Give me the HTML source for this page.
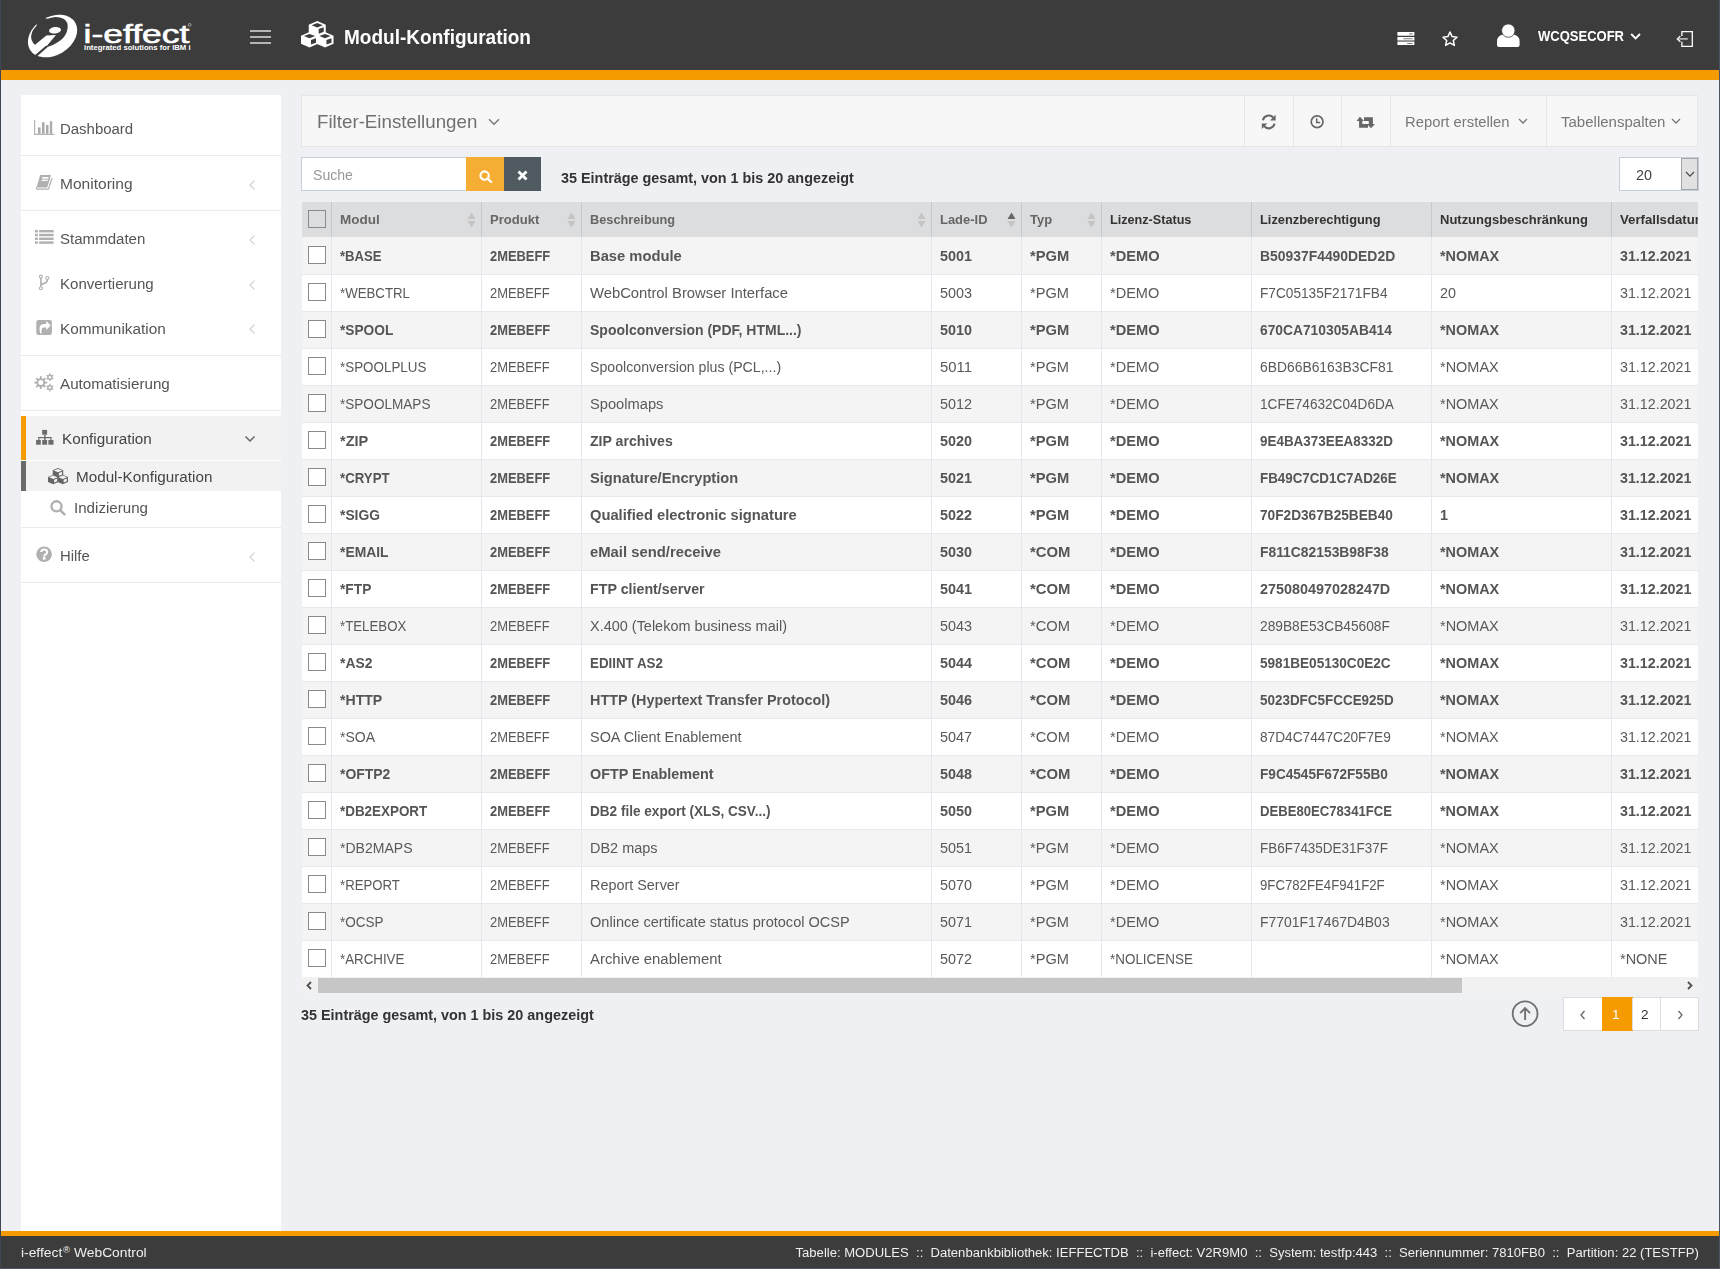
<!DOCTYPE html>
<html><head><meta charset="utf-8"><style>
*{box-sizing:border-box;margin:0;padding:0}
html,body{width:1720px;height:1269px;overflow:hidden}
body{background:#eff0f4;font-family:"Liberation Sans",sans-serif;color:#595959;position:relative}
.a{position:absolute}
.nw{white-space:nowrap}
#bl{left:0;top:0;width:1px;height:1269px;background:#3d4753;z-index:50}
#br{left:1719px;top:0;width:1px;height:1269px;background:#4b5562;z-index:50}
#bb{left:0;top:1268px;width:1720px;height:1px;background:#4b5562;z-index:50}
#hdr{left:0;top:0;width:1720px;height:70px;background:#3c3c3c}
#obar{left:0;top:70px;width:1720px;height:10px;background:#f59b00}
#title{left:344px;top:26px;font-size:19.5px;line-height:22px;font-weight:bold;color:#fff;white-space:nowrap}
#user{left:1537px;top:27px;font-size:14.6px;line-height:17px;font-weight:bold;color:#fff}
/* sidebar */
#side{left:21px;top:95px;width:260px;height:1136px;background:#fff}
.si{position:absolute;left:0;width:260px;height:20px;font-size:14.7px;line-height:20px;color:#555}
.si .t{position:absolute;left:39px;top:0;white-space:nowrap}
.sep{position:absolute;left:0;width:260px;height:1px;background:#ebebeb}
.chev{position:absolute;left:226px;top:4px}
/* filter */
#filt{left:301px;top:95px;width:1397px;height:52px;background:#f7f7f7;border:1px solid #e6e6e6}
#filt .ft{position:absolute;left:15px;top:14px;font-size:18.6px;line-height:22px;color:#777}
.vs{position:absolute;top:0;width:1px;height:50px;background:#e6e6e6}
.btxt{position:absolute;top:16px;font-size:14.7px;line-height:20px;color:#777;white-space:nowrap}
/* search */
#sin{left:301px;top:157px;width:166px;height:34px;background:#fff;border:1px solid #c7cfdb}
#sin span{position:absolute;left:11px;top:7px;font-size:14.7px;line-height:18px;color:#999}
#sbtn{left:466px;top:157px;width:38px;height:34px;background:#f5ad33}
#xbtn{left:504px;top:157px;width:37px;height:34px;background:#4f5a61}
.cnt{font-size:14.7px;line-height:18px;font-weight:bold;color:#333;white-space:nowrap}
#psel{left:1619px;top:157px;width:80px;height:34px;background:#fff;border:1px solid #c5cfdc}
#psel span{position:absolute;left:16px;top:7px;font-size:14.7px;line-height:18px;color:#555}
#pdd{position:absolute;left:61px;top:0;width:17px;height:32px;background:#e1e1e1;border:1px solid #a3a3a3}
/* table */
#tbl{left:302px;top:202px;width:1396px;height:775px;overflow:hidden;background:#fff}
.hd{position:absolute;left:0;top:0;width:1396px;height:35px;background:#dcdddf}
.row{position:absolute;left:0;width:1396px;height:37px}
.odd{background:#f4f4f4}
.even{background:#fff}
.c{position:absolute;top:0;height:37px;line-height:37px;font-size:14.7px;color:#595959;white-space:nowrap;padding-left:9px}
.b .c{font-weight:bold;color:#555}
.hd .c{height:35px;line-height:35px;font-weight:bold;color:#666;font-size:14.3px}
.hd .c.dk{color:#333}
.vl{position:absolute;top:0;width:1px;background:#e3e8ee}
.hvl{position:absolute;top:0;width:1px;height:35px;background:#c8c8c8}
.hl{position:absolute;left:0;width:1396px;height:1px;background:#e6eaef}
.cb{position:absolute;left:6px;width:18px;height:18px;border:1.5px solid #8a8a8a;background:#fff}
.hd .cb{background:#dcdddf}
.sort{position:absolute;top:10px;width:9px;height:16px}
/* scrollbar */
#sbar{left:301px;top:977px;width:1397px;height:17px;background:#f1f1f1}
#sthumb{left:318px;top:978px;width:1144px;height:15px;background:#c6c6c6}
/* pager */
.ptxt{left:301px;top:1005px}
#pg{left:1563px;top:997px;width:136px;height:34px;background:#fff;border:1px solid #dddddd}
#fobar{left:0;top:1231px;width:1720px;height:5px;background:#f59b00}
#ftr{left:0;top:1236px;width:1720px;height:33px;background:#3c3c3c;color:#fff;font-size:13.6px;line-height:16px}

.t{position:absolute;white-space:nowrap;line-height:20px;font-family:"Liberation Sans",sans-serif}

</style></head><body>
<div id="bl" class="a"></div><div id="br" class="a"></div><div id="bb" class="a"></div>
<div id="hdr" class="a"></div><div id="obar" class="a"></div>
<svg class="a" style="left:0;top:0" width="200" height="70" viewBox="0 0 200 70"><defs><mask id="lm"><rect x="0" y="0" width="200" height="70" fill="#fff"/><path d="M46.13 18.61 C48.39 18.88 53.17 16.97 55.97 16.97 C58.77 16.97 61.12 17.72 62.93 18.61 C64.74 19.49 66.04 20.86 66.83 22.30 C67.61 23.73 67.75 25.37 67.65 27.21 C67.55 29.06 67.00 31.52 66.21 33.36 C65.43 35.20 64.30 36.84 62.93 38.28 C61.57 39.71 59.79 40.81 58.02 41.97 C56.24 43.13 54.12 44.39 52.28 45.25 C50.43 46.10 48.80 46.75 46.95 47.09 C45.11 47.43 43.19 47.67 41.21 47.30 C39.23 46.92 36.60 45.93 35.07 44.84 C33.53 43.74 32.64 42.17 31.99 40.74 C31.34 39.30 31.04 37.94 31.17 36.23 C31.31 34.52 31.89 32.34 32.81 30.49 C33.73 28.65 36.12 26.87 36.70 25.16 C37.29 23.46 35.34 21.89 36.30 20.25 C37.25 18.61 40.80 15.60 42.44 15.33 C44.08 15.05 43.88 18.33 46.13 18.61Z" fill="#000"/></mask></defs><g mask="url(#lm)"><ellipse cx="52.54" cy="36.05" rx="26.4" ry="19.12" transform="rotate(-31 52.54 36.05)" fill="#fff"/></g><path d="M35.07 44.84 L46.34 35.61 L55.97 35.00 L46.34 46.48 L37.52 55.08 L34.25 50.98Z" fill="#fff"/><path d="M35.89 55.90 L46.95 46.27" stroke="#3c3c3c" stroke-width="2.2"/><ellipse cx="55.02" cy="30.29" rx="6.05" ry="3.25" transform="rotate(-7 55.02 30.29)" fill="#fff"/><g transform="translate(83.5 42.7) scale(1.365 1)"><text x="0" y="0" font-family="Liberation Sans" font-size="26" fill="#fff" stroke="#fff" stroke-width="0.6">i-effect</text></g><g transform="translate(84 50) scale(1.225 1)"><text x="0" y="0" font-family="Liberation Sans" font-weight="bold" font-size="6.3" fill="#fff">integrated solutions for IBM i</text></g><circle cx="189.6" cy="24.9" r="1.4" fill="none" stroke="#fff" stroke-width="0.5"/></svg>
<!-- hamburger -->
<div class="a" style="left:250px;top:30px;width:21px;height:2px;background:#b4b4b4"></div>
<div class="a" style="left:250px;top:36px;width:21px;height:2px;background:#b4b4b4"></div>
<div class="a" style="left:250px;top:42px;width:21px;height:2px;background:#b4b4b4"></div>
<!-- cubes -->
<svg class="a" style="left:300.6px;top:21.2px" width="33.5" height="27.5" viewBox="0 0 33.50 27.50"><path d="M16.25 0.00 L24.75 3.80 L24.75 11.80 L16.25 15.60 L7.75 11.80 L7.75 3.80Z" fill="#fff"/><path d="M10.65 4.20 L16.25 2.00 L21.85 4.20 L16.25 6.40Z" fill="#3c3c3c"/><path d="M17.65 8.10 L22.75 6.30 L22.75 10.80 L17.75 12.70Z" fill="#3c3c3c"/><path d="M8.50 10.90 L17.00 14.70 L17.00 22.70 L8.50 26.50 L0.00 22.70 L0.00 14.70Z" fill="#fff"/><path d="M2.90 15.10 L8.50 12.90 L14.10 15.10 L8.50 17.30Z" fill="#3c3c3c"/><path d="M9.90 19.00 L15.00 17.20 L15.00 21.70 L10.00 23.60Z" fill="#3c3c3c"/><path d="M24.00 10.90 L32.50 14.70 L32.50 22.70 L24.00 26.50 L15.50 22.70 L15.50 14.70Z" fill="#fff"/><path d="M18.40 15.10 L24.00 12.90 L29.60 15.10 L24.00 17.30Z" fill="#3c3c3c"/><path d="M25.40 19.00 L30.50 17.20 L30.50 21.70 L25.50 23.60Z" fill="#3c3c3c"/></svg>
<!-- server icon -->
<svg class="a" style="left:1390px;top:25px" width="30" height="25" viewBox="1390 25 30 25">
  <rect x="1397.4" y="31.9" width="17" height="3.9" rx="0.6" fill="#fff"/>
  <rect x="1397.4" y="36.9" width="17" height="3.6" rx="0.6" fill="#fff"/>
  <rect x="1397.4" y="40.5" width="17" height="1.4" fill="#9a9a9a"/>
  <rect x="1397.4" y="41.9" width="17" height="3.2" rx="0.6" fill="#fff"/>
  <rect x="1409.2" y="33.4" width="3.5" height="1" fill="#707070"/>
  <rect x="1403.3" y="38.3" width="9.3" height="0.9" fill="#707070"/>
  <rect x="1407.2" y="43.1" width="5.4" height="0.9" fill="#707070"/>
</svg>
<!-- star -->
<svg class="a" style="left:1435px;top:25px" width="30" height="25" viewBox="1435 25 30 25">
  <path d="M1450 32 L1452.1 36.6 L1457 37.2 L1453.3 40.5 L1454.4 45.4 L1450 42.9 L1445.6 45.4 L1446.7 40.5 L1443 37.2 L1447.9 36.6 Z" fill="none" stroke="#fff" stroke-width="1.5" stroke-linejoin="round"/>
</svg>
<!-- user -->
<svg class="a" style="left:1494px;top:22px" width="28" height="28" viewBox="0 0 28 28">
  <path d="M3 25 L3 19.5 Q3 13.5 9.5 12.3 Q14.3 16.3 19.1 12.3 Q25.6 13.5 25.6 19.5 L25.6 23 Q25.6 25 23.6 25 L5 25 Q3 25 3 23 Z" fill="#fff"/>
  <circle cx="14.3" cy="8.6" r="6.7" fill="#fff" stroke="#3c3c3c" stroke-width="0.8"/>
</svg>
<svg class="a" style="left:1629px;top:31px" width="13" height="10" viewBox="0 0 13 10">
  <path d="M2.2 3 L6.6 7.4 L11 3" fill="none" stroke="#fff" stroke-width="1.9"/>
</svg>
<!-- logout -->
<svg class="a" style="left:1668px;top:25px" width="32" height="27" viewBox="1668 25 32 27">
  <path d="M1681.9 35.9 L1681.9 31.6 L1692.3 31.6 L1692.3 46.3 L1681.9 46.3 L1681.9 41.8" fill="none" stroke="#fff" stroke-width="1.3"/>
  <path d="M1680.4 36 L1677.3 38.9 L1680.4 41.8" fill="none" stroke="#fff" stroke-width="1.3"/>
  <path d="M1678.3 38.9 L1687.8 38.9" stroke="#ddd" stroke-width="1.3"/>
</svg>

<div class="t" style="left:344px;top:27px;font-size:19.61px;font-weight:bold;color:#fff;transform:scaleX(0.9700);transform-origin:0 0;">Modul-Konfiguration</div>
<div class="t" style="left:1538px;top:26px;font-size:14.22px;font-weight:bold;color:#fff;transform:scaleX(0.9148);transform-origin:0 0;">WCQSECOFR</div>
<div id="side" class="a">
  <!-- Dashboard -->
  <svg class="a" style="left:13px;top:25px" width="21" height="16" viewBox="0 0 21 16">
    <path d="M0.6 0 L0.6 14.4 L20.5 14.4" fill="none" stroke="#b4b4b4" stroke-width="1.2"/>
    <rect x="4" y="7.4" width="2.6" height="6.4" fill="#aaa"/>
    <rect x="8" y="2.2" width="2.5" height="11.6" fill="#aaa"/>
    <rect x="12" y="5" width="2.5" height="8.8" fill="#aaa"/>
    <rect x="15.9" y="1.2" width="2.3" height="12.6" fill="#aaa"/>
  </svg>
  <div class="sep" style="top:60px"></div>
  <!-- Monitoring book -->
  <svg class="chev" style="left:227px;top:84px" width="8" height="12" viewBox="0 0 8 12"><path d="M6.5 1.5 L2 6 L6.5 10.5" fill="none" stroke="#d4d4d8" stroke-width="1.25"/></svg>
  <div class="sep" style="top:115px"></div>
  <!-- Stammdaten list -->
  <svg class="chev" style="left:227px;top:139px" width="8" height="12" viewBox="0 0 8 12"><path d="M6.5 1.5 L2 6 L6.5 10.5" fill="none" stroke="#d4d4d8" stroke-width="1.25"/></svg>
  <!-- Konvertierung fork -->
  <svg class="chev" style="left:227px;top:184px" width="8" height="12" viewBox="0 0 8 12"><path d="M6.5 1.5 L2 6 L6.5 10.5" fill="none" stroke="#d4d4d8" stroke-width="1.25"/></svg>
  <!-- Kommunikation share -->
  <svg class="chev" style="left:227px;top:228px" width="8" height="12" viewBox="0 0 8 12"><path d="M6.5 1.5 L2 6 L6.5 10.5" fill="none" stroke="#d4d4d8" stroke-width="1.25"/></svg>
  <div class="sep" style="top:260px"></div>
  <!-- Automatisierung gears -->
  <div class="sep" style="top:315px"></div>
  <!-- Konfiguration active -->
  <div class="a" style="left:0;top:321px;width:260px;height:44px;background:#f2f2f2"></div>
  <div class="a" style="left:0;top:321px;width:5px;height:44px;background:#f59b00"></div>
  <svg class="a" style="left:223px;top:340px" width="12" height="8" viewBox="0 0 12 8"><path d="M1.5 1.5 L6 6 L10.5 1.5" fill="none" stroke="#666" stroke-width="1.5"/></svg>
  <!-- Modul-Konfiguration sub active -->
  <div class="a" style="left:0;top:366px;width:260px;height:30px;background:#f2f2f2"></div>
  <div class="a" style="left:0;top:366px;width:5px;height:30px;background:#6b6b6b"></div>
<svg class="a" style="left:27px;top:372.8px" width="21.0" height="17.3" viewBox="0 0 34.13 28.13"><path d="M16.25 0.00 L24.75 3.80 L24.75 11.80 L16.25 15.60 L7.75 11.80 L7.75 3.80Z" fill="#666"/><path d="M9.25 4.20 L16.25 1.45 L23.25 4.20 L16.25 6.95Z" fill="#f2f2f2"/><path d="M17.65 8.10 L22.75 6.30 L22.75 10.80 L17.75 12.70Z" fill="#f2f2f2"/><path d="M8.50 10.90 L17.00 14.70 L17.00 22.70 L8.50 26.50 L0.00 22.70 L0.00 14.70Z" fill="#666"/><path d="M1.50 15.10 L8.50 12.35 L15.50 15.10 L8.50 17.85Z" fill="#f2f2f2"/><path d="M9.90 19.00 L15.00 17.20 L15.00 21.70 L10.00 23.60Z" fill="#f2f2f2"/><path d="M24.00 10.90 L32.50 14.70 L32.50 22.70 L24.00 26.50 L15.50 22.70 L15.50 14.70Z" fill="#666"/><path d="M17.00 15.10 L24.00 12.35 L31.00 15.10 L24.00 17.85Z" fill="#f2f2f2"/><path d="M25.40 19.00 L30.50 17.20 L30.50 21.70 L25.50 23.60Z" fill="#f2f2f2"/></svg>
  <!-- Indizierung -->
  <div class="sep" style="top:432px"></div>
  <!-- Hilfe -->
  <svg class="chev" style="left:227px;top:456px" width="8" height="12" viewBox="0 0 8 12"><path d="M6.5 1.5 L2 6 L6.5 10.5" fill="none" stroke="#d4d4d8" stroke-width="1.25"/></svg>
  <div class="sep" style="top:487px"></div>
</div>

<svg class="a" style="left:0;top:0" width="300" height="600" viewBox="0 0 300 600"><path d="M40.2 174.9 L51 174.9 L47.6 186.4 Q47.3 187.5 46.2 187.5 L36.5 187.5 Z" fill="#b0b0b0"/><path d="M42.5 177.1 L48.6 177.1 L48.2 178.7 L42.1 178.7 Z M41.7 179.8 L47.9 179.8 L47.6 181.1 L41.4 181.1 Z" fill="#fff"/><path d="M36.6 187.2 Q36 189.2 37.6 189.2 L48.4 189.2 L52 178.3" fill="none" stroke="#b0b0b0" stroke-width="1.2"/><rect x="34.9" y="230.0" width="3" height="2.4" fill="#b0b0b0"/><rect x="39.1" y="230.0" width="14.5" height="2.4" fill="#b0b0b0"/><rect x="34.9" y="233.8" width="3" height="2.4" fill="#b0b0b0"/><rect x="39.1" y="233.8" width="14.5" height="2.4" fill="#b0b0b0"/><rect x="34.9" y="237.6" width="3" height="2.4" fill="#b0b0b0"/><rect x="39.1" y="237.6" width="14.5" height="2.4" fill="#b0b0b0"/><rect x="34.9" y="241.4" width="3" height="2.4" fill="#b0b0b0"/><rect x="39.1" y="241.4" width="14.5" height="2.4" fill="#b0b0b0"/><g fill="none" stroke="#b0b0b0" stroke-width="1.1"><circle cx="40.9" cy="276.6" r="1.5"/><circle cx="47.4" cy="278" r="1.5"/><circle cx="40.9" cy="288.3" r="1.5"/></g><path d="M40.9 278.1 L40.9 286.8 M47.4 279.5 Q47.6 283 41.3 284.4" fill="none" stroke="#b0b0b0" stroke-width="1.6"/><rect x="36.3" y="319.9" width="15.6" height="15" rx="2.2" fill="#b0b0b0"/><path d="M50.7 325.5 L46.2 321.1 L46.2 323.9 L43.5 323.9 Q39.3 324.3 39.5 329 Q39.7 331.8 40.6 333.7 L41.5 333.7 Q41.2 330.2 41.8 328.8 Q42.5 327.6 44 327.6 L46.2 327.6 L46.2 330 Z" fill="#fff"/><g transform="translate(40.8 382.6)" fill="#b0b0b0"><circle r="4.4"/><rect x="-0.9" y="-6.4" width="1.8" height="12.8" transform="rotate(0.0)"/><rect x="-0.9" y="-6.4" width="1.8" height="12.8" transform="rotate(45.0)"/><rect x="-0.9" y="-6.4" width="1.8" height="12.8" transform="rotate(90.0)"/><rect x="-0.9" y="-6.4" width="1.8" height="12.8" transform="rotate(135.0)"/></g><circle cx="40.8" cy="382.6" r="2.5" fill="#fff"/><g transform="translate(49.9 377.3)" fill="#b0b0b0"><circle r="2.7"/><rect x="-0.65" y="-3.8" width="1.3" height="7.6" transform="rotate(0.0)"/><rect x="-0.65" y="-3.8" width="1.3" height="7.6" transform="rotate(60.0)"/><rect x="-0.65" y="-3.8" width="1.3" height="7.6" transform="rotate(120.0)"/></g><circle cx="49.9" cy="377.3" r="1.2" fill="#fff"/><g transform="translate(49.9 387.6)" fill="#b0b0b0"><circle r="2.7"/><rect x="-0.65" y="-3.8" width="1.3" height="7.6" transform="rotate(0.0)"/><rect x="-0.65" y="-3.8" width="1.3" height="7.6" transform="rotate(60.0)"/><rect x="-0.65" y="-3.8" width="1.3" height="7.6" transform="rotate(120.0)"/></g><circle cx="49.9" cy="387.6" r="1.2" fill="#fff"/><g fill="#6b6b6b"><rect x="42.2" y="429.9" width="4.9" height="4.8"/><rect x="44.2" y="434.7" width="1.4" height="5.3"/><rect x="38.3" y="437" width="13.2" height="1.2"/><rect x="38.3" y="437" width="1.1" height="3.2"/><rect x="50.4" y="437" width="1.1" height="3.2"/><rect x="36.1" y="440" width="4.7" height="4.7"/><rect x="42.2" y="440" width="4.9" height="4.7"/><rect x="48.4" y="440" width="5.1" height="4.7"/></g><circle cx="56.5" cy="506.3" r="5.05" fill="none" stroke="#b0b0b0" stroke-width="2.3"/><path d="M60.6 510.6 L64.5 514.4" stroke="#b0b0b0" stroke-width="2.5" stroke-linecap="round"/><circle cx="44.1" cy="554.3" r="7.8" fill="#b0b0b0"/><path d="M41.2 552 Q41.2 549.4 44.2 549.4 Q47.2 549.4 47.2 551.9 Q47.2 553.5 45.6 554.4 Q44.2 555.2 44.2 556.5" fill="none" stroke="#fff" stroke-width="2"/><rect x="42.9" y="557" width="2.6" height="2.7" fill="#fff"/></svg>
<div class="t" style="left:60px;top:119px;font-size:14.53px;color:#555;transform:scaleX(1.0301);transform-origin:0 0;">Dashboard</div>
<div class="t" style="left:60px;top:174px;font-size:14.53px;color:#555;transform:scaleX(1.0703);transform-origin:0 0;">Monitoring</div>
<div class="t" style="left:60px;top:229px;font-size:14.53px;color:#555;transform:scaleX(1.0370);transform-origin:0 0;">Stammdaten</div>
<div class="t" style="left:60px;top:274px;font-size:14.53px;color:#555;transform:scaleX(1.0368);transform-origin:0 0;">Konvertierung</div>
<div class="t" style="left:60px;top:319px;font-size:14.53px;color:#555;transform:scaleX(1.0571);transform-origin:0 0;">Kommunikation</div>
<div class="t" style="left:59.5px;top:374px;font-size:14.53px;color:#555;transform:scaleX(1.0469);transform-origin:0 0;">Automatisierung</div>
<div class="t" style="left:62px;top:429px;font-size:14.53px;color:#444;transform:scaleX(1.0497);transform-origin:0 0;">Konfiguration</div>
<div class="t" style="left:76px;top:467px;font-size:14.53px;color:#444;transform:scaleX(1.0498);transform-origin:0 0;">Modul-Konfiguration</div>
<div class="t" style="left:74px;top:498px;font-size:14.53px;color:#555;transform:scaleX(1.0416);transform-origin:0 0;">Indizierung</div>
<div class="t" style="left:60px;top:546px;font-size:14.53px;color:#555;transform:scaleX(1.0237);transform-origin:0 0;">Hilfe</div>
<div id="filt" class="a">
  <svg class="a" style="left:186px;top:22px" width="12" height="8" viewBox="0 0 12 8"><path d="M1 1.2 L6 6.2 L11 1.2" fill="none" stroke="#777" stroke-width="1.4"/></svg>
  <div class="vs" style="left:942px"></div>
  <div class="vs" style="left:991px"></div>
  <div class="vs" style="left:1039px"></div>
  <div class="vs" style="left:1088px"></div>
  <div class="vs" style="left:1244px"></div>
  <!-- refresh / clock / retweet in page coords -->
  <svg class="a" style="left:-302px;top:-96px" width="1400" height="160" viewBox="0 0 1400 160">
    <g fill="none" stroke="#666" stroke-width="2.1">
      <path d="M1262.9 120.2 A5.9 5.9 0 0 1 1273.2 117.6"/>
      <path d="M1274.5 123.6 A5.9 5.9 0 0 1 1264.2 126.2"/>
    </g>
    <path d="M1275.6 114.8 L1275.6 120.4 L1270.0 120.4 Z" fill="#666"/>
    <path d="M1261.8 129 L1261.8 123.4 L1267.4 123.4 Z" fill="#666"/>
    <circle cx="1317.1" cy="121.8" r="5.9" fill="none" stroke="#666" stroke-width="1.7"/>
    <path d="M1316.7 118.2 L1316.7 122.6 L1320.2 122.6" fill="none" stroke="#666" stroke-width="1.5"/>
    <path d="M1359.9 116.8 L1364 120.9 L1362.3 120.9 L1362.3 124.1 L1368 124.1 L1368 127.8 L1359.1 127.8 L1359.1 120.9 L1356.6 120.9 Z" fill="#666"/>
    <path d="M1364 117.2 L1372.9 117.2 L1372.9 124.1 L1375 124.1 L1371 128.2 L1367 124.1 L1368.8 124.1 L1368.8 120.9 L1364 120.9 Z" fill="#666"/>
  </svg>
  <svg class="a" style="left:1216px;top:22px" width="10" height="7" viewBox="0 0 10 7"><path d="M1 1 L5 5 L9 1" fill="none" stroke="#777" stroke-width="1.3"/></svg>
  <svg class="a" style="left:1369px;top:22px" width="10" height="7" viewBox="0 0 10 7"><path d="M1 1 L5 5 L9 1" fill="none" stroke="#777" stroke-width="1.3"/></svg>
</div>
<div id="sin" class="a"></div>
<div id="sbtn" class="a">
  <svg class="a" style="left:13px;top:13px" width="14" height="13" viewBox="0 0 14 13">
    <circle cx="5.6" cy="5.6" r="4.2" fill="none" stroke="#fff" stroke-width="2.1"/>
    <path d="M8.6 8.6 L12.2 12" stroke="#fff" stroke-width="2.3" stroke-linecap="round"/>
  </svg>
</div>
<div id="xbtn" class="a">
  <svg class="a" style="left:12.5px;top:13px" width="11" height="11" viewBox="0 0 11 11">
    <path d="M1.5 1.5 L9.5 9.5 M9.5 1.5 L1.5 9.5" stroke="#fff" stroke-width="2.8"/>
  </svg>
</div>
<div id="psel" class="a"><div id="pdd">
  <svg class="a" style="left:2.5px;top:12px" width="10" height="7" viewBox="0 0 10 7"><path d="M1 1 L5 5.2 L9 1" fill="none" stroke="#444" stroke-width="1.1"/></svg>
</div></div>

<div class="t" style="left:317px;top:112px;font-size:18.89px;color:#707070;transform:scaleX(0.9926);transform-origin:0 0;">Filter-Einstellungen</div>
<div class="t" style="left:1405px;top:112px;font-size:14.53px;color:#777;transform:scaleX(1.0206);transform-origin:0 0;">Report erstellen</div>
<div class="t" style="left:1561px;top:112px;font-size:14.53px;color:#777;transform:scaleX(1.0348);transform-origin:0 0;">Tabellenspalten</div>
<div class="t" style="left:313px;top:165px;font-size:14.53px;color:#999;transform:scaleX(0.9690);transform-origin:0 0;">Suche</div>
<div class="t" style="left:561px;top:168px;font-size:14.53px;font-weight:bold;color:#333;transform:scaleX(0.9914);transform-origin:0 0;">35 Einträge gesamt, von 1 bis 20 angezeigt</div>
<div class="t" style="left:1636px;top:165px;font-size:14.53px;color:#444;transform:scaleX(0.9906);transform-origin:0 0;">20</div>
<div id="tbl" class="a"><div class="hd"></div><div class="cb" style="top:8px;background:#dcdddf"></div><div class="hvl" style="left:29px"></div><div class="t" style="left:38px;top:8px;font-size:13.49px;font-weight:bold;color:#666;transform:scaleX(1.0002);transform-origin:0 0;">Modul</div><svg class="sort" style="left:165px" viewBox="0 0 9 16"><path d="M0.5 7 L4.5 0.5 L8.5 7Z" fill="#c4c4c4"/><path d="M0.5 9 L4.5 15.5 L8.5 9Z" fill="#c4c4c4"/></svg><div class="hvl" style="left:179px"></div><div class="t" style="left:188px;top:8px;font-size:13.49px;font-weight:bold;color:#666;transform:scaleX(0.9689);transform-origin:0 0;">Produkt</div><svg class="sort" style="left:265px" viewBox="0 0 9 16"><path d="M0.5 7 L4.5 0.5 L8.5 7Z" fill="#c4c4c4"/><path d="M0.5 9 L4.5 15.5 L8.5 9Z" fill="#c4c4c4"/></svg><div class="hvl" style="left:279px"></div><div class="t" style="left:288px;top:8px;font-size:13.49px;font-weight:bold;color:#666;transform:scaleX(0.9458);transform-origin:0 0;">Beschreibung</div><svg class="sort" style="left:615px" viewBox="0 0 9 16"><path d="M0.5 7 L4.5 0.5 L8.5 7Z" fill="#c4c4c4"/><path d="M0.5 9 L4.5 15.5 L8.5 9Z" fill="#c4c4c4"/></svg><div class="hvl" style="left:629px"></div><div class="t" style="left:638px;top:8px;font-size:13.49px;font-weight:bold;color:#666;transform:scaleX(0.9602);transform-origin:0 0;">Lade-ID</div><svg class="sort" style="left:705px" viewBox="0 0 9 16"><path d="M0.5 7 L4.5 0.5 L8.5 7Z" fill="#666"/><path d="M0.5 9 L4.5 15.5 L8.5 9Z" fill="#c4c4c4"/></svg><div class="hvl" style="left:719px"></div><div class="t" style="left:728px;top:8px;font-size:13.49px;font-weight:bold;color:#666;transform:scaleX(0.9619);transform-origin:0 0;">Typ</div><svg class="sort" style="left:785px" viewBox="0 0 9 16"><path d="M0.5 7 L4.5 0.5 L8.5 7Z" fill="#c4c4c4"/><path d="M0.5 9 L4.5 15.5 L8.5 9Z" fill="#c4c4c4"/></svg><div class="hvl" style="left:799px"></div><div class="t" style="left:808px;top:8px;font-size:13.49px;font-weight:bold;color:#333;transform:scaleX(0.9365);transform-origin:0 0;">Lizenz-Status</div><div class="hvl" style="left:949px"></div><div class="t" style="left:958px;top:8px;font-size:13.49px;font-weight:bold;color:#333;transform:scaleX(0.9522);transform-origin:0 0;">Lizenzberechtigung</div><div class="hvl" style="left:1129px"></div><div class="t" style="left:1138px;top:8px;font-size:13.49px;font-weight:bold;color:#333;transform:scaleX(0.9629);transform-origin:0 0;">Nutzungsbeschränkung</div><div class="hvl" style="left:1309px"></div><div class="t" style="left:1318px;top:8px;font-size:13.49px;font-weight:bold;color:#333;transform:scaleX(0.9785);transform-origin:0 0;">Verfallsdatum</div><div class="row" style="top:35px;background:#f4f4f4"></div><div class="cb" style="top:44px"></div><div class="t" style="left:38px;top:44px;font-size:14.53px;font-weight:bold;color:#555;transform:scaleX(0.9008);transform-origin:0 0;">*BASE</div><div class="t" style="left:188px;top:44px;font-size:14.53px;font-weight:bold;color:#555;transform:scaleX(0.8886);transform-origin:0 0;">2MEBEFF</div><div class="t" style="left:288px;top:44px;font-size:14.53px;font-weight:bold;color:#555;transform:scaleX(1.0147);transform-origin:0 0;">Base module</div><div class="t" style="left:638px;top:44px;font-size:14.53px;font-weight:bold;color:#555;transform:scaleX(0.9906);transform-origin:0 0;">5001</div><div class="t" style="left:728px;top:44px;font-size:14.53px;font-weight:bold;color:#555;transform:scaleX(1.0141);transform-origin:0 0;">*PGM</div><div class="t" style="left:808px;top:44px;font-size:14.53px;font-weight:bold;color:#555;transform:scaleX(1.0087);transform-origin:0 0;">*DEMO</div><div class="t" style="left:958px;top:44px;font-size:14.53px;font-weight:bold;color:#555;transform:scaleX(0.9572);transform-origin:0 0;">B50937F4490DED2D</div><div class="t" style="left:1138px;top:44px;font-size:14.53px;font-weight:bold;color:#555;transform:scaleX(0.9922);transform-origin:0 0;">*NOMAX</div><div class="t" style="left:1318px;top:44px;font-size:14.53px;font-weight:bold;color:#555;transform:scaleX(0.9831);transform-origin:0 0;">31.12.2021</div><div class="row" style="top:72px;background:#fff"></div><div class="cb" style="top:81px"></div><div class="t" style="left:38px;top:81px;font-size:14.53px;color:#595959;transform:scaleX(0.9132);transform-origin:0 0;">*WEBCTRL</div><div class="t" style="left:188px;top:81px;font-size:14.53px;color:#595959;transform:scaleX(0.8915);transform-origin:0 0;">2MEBEFF</div><div class="t" style="left:288px;top:81px;font-size:14.53px;color:#595959;transform:scaleX(1.0198);transform-origin:0 0;">WebControl Browser Interface</div><div class="t" style="left:638px;top:81px;font-size:14.53px;color:#595959;transform:scaleX(0.9906);transform-origin:0 0;">5003</div><div class="t" style="left:728px;top:81px;font-size:14.53px;color:#595959;transform:scaleX(1.0060);transform-origin:0 0;">*PGM</div><div class="t" style="left:808px;top:81px;font-size:14.53px;color:#595959;transform:scaleX(1.0003);transform-origin:0 0;">*DEMO</div><div class="t" style="left:958px;top:81px;font-size:14.53px;color:#595959;transform:scaleX(0.9405);transform-origin:0 0;">F7C05135F2171FB4</div><div class="t" style="left:1138px;top:81px;font-size:14.53px;color:#595959;transform:scaleX(0.9906);transform-origin:0 0;">20</div><div class="t" style="left:1318px;top:81px;font-size:14.53px;color:#595959;transform:scaleX(0.9831);transform-origin:0 0;">31.12.2021</div><div class="hl" style="top:72px"></div><div class="row" style="top:109px;background:#f4f4f4"></div><div class="cb" style="top:118px"></div><div class="t" style="left:38px;top:118px;font-size:14.53px;font-weight:bold;color:#555;transform:scaleX(0.9442);transform-origin:0 0;">*SPOOL</div><div class="t" style="left:188px;top:118px;font-size:14.53px;font-weight:bold;color:#555;transform:scaleX(0.8886);transform-origin:0 0;">2MEBEFF</div><div class="t" style="left:288px;top:118px;font-size:14.53px;font-weight:bold;color:#555;transform:scaleX(0.9643);transform-origin:0 0;">Spoolconversion (PDF, HTML...)</div><div class="t" style="left:638px;top:118px;font-size:14.53px;font-weight:bold;color:#555;transform:scaleX(0.9906);transform-origin:0 0;">5010</div><div class="t" style="left:728px;top:118px;font-size:14.53px;font-weight:bold;color:#555;transform:scaleX(1.0141);transform-origin:0 0;">*PGM</div><div class="t" style="left:808px;top:118px;font-size:14.53px;font-weight:bold;color:#555;transform:scaleX(1.0087);transform-origin:0 0;">*DEMO</div><div class="t" style="left:958px;top:118px;font-size:14.53px;font-weight:bold;color:#555;transform:scaleX(0.9503);transform-origin:0 0;">670CA710305AB414</div><div class="t" style="left:1138px;top:118px;font-size:14.53px;font-weight:bold;color:#555;transform:scaleX(0.9922);transform-origin:0 0;">*NOMAX</div><div class="t" style="left:1318px;top:118px;font-size:14.53px;font-weight:bold;color:#555;transform:scaleX(0.9831);transform-origin:0 0;">31.12.2021</div><div class="hl" style="top:109px"></div><div class="row" style="top:146px;background:#fff"></div><div class="cb" style="top:155px"></div><div class="t" style="left:38px;top:155px;font-size:14.53px;color:#595959;transform:scaleX(0.9232);transform-origin:0 0;">*SPOOLPLUS</div><div class="t" style="left:188px;top:155px;font-size:14.53px;color:#595959;transform:scaleX(0.8915);transform-origin:0 0;">2MEBEFF</div><div class="t" style="left:288px;top:155px;font-size:14.53px;color:#595959;transform:scaleX(0.9749);transform-origin:0 0;">Spoolconversion plus (PCL,...)</div><div class="t" style="left:638px;top:155px;font-size:14.53px;color:#595959;transform:scaleX(1.0248);transform-origin:0 0;">5011</div><div class="t" style="left:728px;top:155px;font-size:14.53px;color:#595959;transform:scaleX(1.0060);transform-origin:0 0;">*PGM</div><div class="t" style="left:808px;top:155px;font-size:14.53px;color:#595959;transform:scaleX(1.0003);transform-origin:0 0;">*DEMO</div><div class="t" style="left:958px;top:155px;font-size:14.53px;color:#595959;transform:scaleX(0.9555);transform-origin:0 0;">6BD66B6163B3CF81</div><div class="t" style="left:1138px;top:155px;font-size:14.53px;color:#595959;transform:scaleX(0.9970);transform-origin:0 0;">*NOMAX</div><div class="t" style="left:1318px;top:155px;font-size:14.53px;color:#595959;transform:scaleX(0.9831);transform-origin:0 0;">31.12.2021</div><div class="hl" style="top:146px"></div><div class="row" style="top:183px;background:#f4f4f4"></div><div class="cb" style="top:192px"></div><div class="t" style="left:38px;top:192px;font-size:14.53px;color:#595959;transform:scaleX(0.9342);transform-origin:0 0;">*SPOOLMAPS</div><div class="t" style="left:188px;top:192px;font-size:14.53px;color:#595959;transform:scaleX(0.8915);transform-origin:0 0;">2MEBEFF</div><div class="t" style="left:288px;top:192px;font-size:14.53px;color:#595959;transform:scaleX(1.0103);transform-origin:0 0;">Spoolmaps</div><div class="t" style="left:638px;top:192px;font-size:14.53px;color:#595959;transform:scaleX(0.9906);transform-origin:0 0;">5012</div><div class="t" style="left:728px;top:192px;font-size:14.53px;color:#595959;transform:scaleX(1.0060);transform-origin:0 0;">*PGM</div><div class="t" style="left:808px;top:192px;font-size:14.53px;color:#595959;transform:scaleX(1.0003);transform-origin:0 0;">*DEMO</div><div class="t" style="left:958px;top:192px;font-size:14.53px;color:#595959;transform:scaleX(0.9373);transform-origin:0 0;">1CFE74632C04D6DA</div><div class="t" style="left:1138px;top:192px;font-size:14.53px;color:#595959;transform:scaleX(0.9970);transform-origin:0 0;">*NOMAX</div><div class="t" style="left:1318px;top:192px;font-size:14.53px;color:#595959;transform:scaleX(0.9831);transform-origin:0 0;">31.12.2021</div><div class="hl" style="top:183px"></div><div class="row" style="top:220px;background:#fff"></div><div class="cb" style="top:229px"></div><div class="t" style="left:38px;top:229px;font-size:14.53px;font-weight:bold;color:#555;transform:scaleX(0.9997);transform-origin:0 0;">*ZIP</div><div class="t" style="left:188px;top:229px;font-size:14.53px;font-weight:bold;color:#555;transform:scaleX(0.8886);transform-origin:0 0;">2MEBEFF</div><div class="t" style="left:288px;top:229px;font-size:14.53px;font-weight:bold;color:#555;transform:scaleX(0.9710);transform-origin:0 0;">ZIP archives</div><div class="t" style="left:638px;top:229px;font-size:14.53px;font-weight:bold;color:#555;transform:scaleX(0.9906);transform-origin:0 0;">5020</div><div class="t" style="left:728px;top:229px;font-size:14.53px;font-weight:bold;color:#555;transform:scaleX(1.0141);transform-origin:0 0;">*PGM</div><div class="t" style="left:808px;top:229px;font-size:14.53px;font-weight:bold;color:#555;transform:scaleX(1.0087);transform-origin:0 0;">*DEMO</div><div class="t" style="left:958px;top:229px;font-size:14.53px;font-weight:bold;color:#555;transform:scaleX(0.9251);transform-origin:0 0;">9E4BA373EEA8332D</div><div class="t" style="left:1138px;top:229px;font-size:14.53px;font-weight:bold;color:#555;transform:scaleX(0.9922);transform-origin:0 0;">*NOMAX</div><div class="t" style="left:1318px;top:229px;font-size:14.53px;font-weight:bold;color:#555;transform:scaleX(0.9831);transform-origin:0 0;">31.12.2021</div><div class="hl" style="top:220px"></div><div class="row" style="top:257px;background:#f4f4f4"></div><div class="cb" style="top:266px"></div><div class="t" style="left:38px;top:266px;font-size:14.53px;font-weight:bold;color:#555;transform:scaleX(0.9132);transform-origin:0 0;">*CRYPT</div><div class="t" style="left:188px;top:266px;font-size:14.53px;font-weight:bold;color:#555;transform:scaleX(0.8886);transform-origin:0 0;">2MEBEFF</div><div class="t" style="left:288px;top:266px;font-size:14.53px;font-weight:bold;color:#555;transform:scaleX(1.0095);transform-origin:0 0;">Signature/Encryption</div><div class="t" style="left:638px;top:266px;font-size:14.53px;font-weight:bold;color:#555;transform:scaleX(0.9906);transform-origin:0 0;">5021</div><div class="t" style="left:728px;top:266px;font-size:14.53px;font-weight:bold;color:#555;transform:scaleX(1.0141);transform-origin:0 0;">*PGM</div><div class="t" style="left:808px;top:266px;font-size:14.53px;font-weight:bold;color:#555;transform:scaleX(1.0087);transform-origin:0 0;">*DEMO</div><div class="t" style="left:958px;top:266px;font-size:14.53px;font-weight:bold;color:#555;transform:scaleX(0.9199);transform-origin:0 0;">FB49C7CD1C7AD26E</div><div class="t" style="left:1138px;top:266px;font-size:14.53px;font-weight:bold;color:#555;transform:scaleX(0.9922);transform-origin:0 0;">*NOMAX</div><div class="t" style="left:1318px;top:266px;font-size:14.53px;font-weight:bold;color:#555;transform:scaleX(0.9831);transform-origin:0 0;">31.12.2021</div><div class="hl" style="top:257px"></div><div class="row" style="top:294px;background:#fff"></div><div class="cb" style="top:303px"></div><div class="t" style="left:38px;top:303px;font-size:14.53px;font-weight:bold;color:#555;transform:scaleX(0.9531);transform-origin:0 0;">*SIGG</div><div class="t" style="left:188px;top:303px;font-size:14.53px;font-weight:bold;color:#555;transform:scaleX(0.8886);transform-origin:0 0;">2MEBEFF</div><div class="t" style="left:288px;top:303px;font-size:14.53px;font-weight:bold;color:#555;transform:scaleX(1.0132);transform-origin:0 0;">Qualified electronic signature</div><div class="t" style="left:638px;top:303px;font-size:14.53px;font-weight:bold;color:#555;transform:scaleX(0.9906);transform-origin:0 0;">5022</div><div class="t" style="left:728px;top:303px;font-size:14.53px;font-weight:bold;color:#555;transform:scaleX(1.0141);transform-origin:0 0;">*PGM</div><div class="t" style="left:808px;top:303px;font-size:14.53px;font-weight:bold;color:#555;transform:scaleX(1.0087);transform-origin:0 0;">*DEMO</div><div class="t" style="left:958px;top:303px;font-size:14.53px;font-weight:bold;color:#555;transform:scaleX(0.9410);transform-origin:0 0;">70F2D367B25BEB40</div><div class="t" style="left:1138px;top:303px;font-size:14.53px;font-weight:bold;color:#555;transform:scaleX(0.9906);transform-origin:0 0;">1</div><div class="t" style="left:1318px;top:303px;font-size:14.53px;font-weight:bold;color:#555;transform:scaleX(0.9831);transform-origin:0 0;">31.12.2021</div><div class="hl" style="top:294px"></div><div class="row" style="top:331px;background:#f4f4f4"></div><div class="cb" style="top:340px"></div><div class="t" style="left:38px;top:340px;font-size:14.53px;font-weight:bold;color:#555;transform:scaleX(0.9553);transform-origin:0 0;">*EMAIL</div><div class="t" style="left:188px;top:340px;font-size:14.53px;font-weight:bold;color:#555;transform:scaleX(0.8886);transform-origin:0 0;">2MEBEFF</div><div class="t" style="left:288px;top:340px;font-size:14.53px;font-weight:bold;color:#555;transform:scaleX(1.0212);transform-origin:0 0;">eMail send/receive</div><div class="t" style="left:638px;top:340px;font-size:14.53px;font-weight:bold;color:#555;transform:scaleX(0.9906);transform-origin:0 0;">5030</div><div class="t" style="left:728px;top:340px;font-size:14.53px;font-weight:bold;color:#555;transform:scaleX(1.0220);transform-origin:0 0;">*COM</div><div class="t" style="left:808px;top:340px;font-size:14.53px;font-weight:bold;color:#555;transform:scaleX(1.0087);transform-origin:0 0;">*DEMO</div><div class="t" style="left:958px;top:340px;font-size:14.53px;font-weight:bold;color:#555;transform:scaleX(0.9543);transform-origin:0 0;">F811C82153B98F38</div><div class="t" style="left:1138px;top:340px;font-size:14.53px;font-weight:bold;color:#555;transform:scaleX(0.9922);transform-origin:0 0;">*NOMAX</div><div class="t" style="left:1318px;top:340px;font-size:14.53px;font-weight:bold;color:#555;transform:scaleX(0.9831);transform-origin:0 0;">31.12.2021</div><div class="hl" style="top:331px"></div><div class="row" style="top:368px;background:#fff"></div><div class="cb" style="top:377px"></div><div class="t" style="left:38px;top:377px;font-size:14.53px;font-weight:bold;color:#555;transform:scaleX(0.9475);transform-origin:0 0;">*FTP</div><div class="t" style="left:188px;top:377px;font-size:14.53px;font-weight:bold;color:#555;transform:scaleX(0.8886);transform-origin:0 0;">2MEBEFF</div><div class="t" style="left:288px;top:377px;font-size:14.53px;font-weight:bold;color:#555;transform:scaleX(0.9822);transform-origin:0 0;">FTP client/server</div><div class="t" style="left:638px;top:377px;font-size:14.53px;font-weight:bold;color:#555;transform:scaleX(0.9906);transform-origin:0 0;">5041</div><div class="t" style="left:728px;top:377px;font-size:14.53px;font-weight:bold;color:#555;transform:scaleX(1.0220);transform-origin:0 0;">*COM</div><div class="t" style="left:808px;top:377px;font-size:14.53px;font-weight:bold;color:#555;transform:scaleX(1.0087);transform-origin:0 0;">*DEMO</div><div class="t" style="left:958px;top:377px;font-size:14.53px;font-weight:bold;color:#555;transform:scaleX(0.9899);transform-origin:0 0;">275080497028247D</div><div class="t" style="left:1138px;top:377px;font-size:14.53px;font-weight:bold;color:#555;transform:scaleX(0.9922);transform-origin:0 0;">*NOMAX</div><div class="t" style="left:1318px;top:377px;font-size:14.53px;font-weight:bold;color:#555;transform:scaleX(0.9831);transform-origin:0 0;">31.12.2021</div><div class="hl" style="top:368px"></div><div class="row" style="top:405px;background:#f4f4f4"></div><div class="cb" style="top:414px"></div><div class="t" style="left:38px;top:414px;font-size:14.53px;color:#595959;transform:scaleX(0.9131);transform-origin:0 0;">*TELEBOX</div><div class="t" style="left:188px;top:414px;font-size:14.53px;color:#595959;transform:scaleX(0.8915);transform-origin:0 0;">2MEBEFF</div><div class="t" style="left:288px;top:414px;font-size:14.53px;color:#595959;transform:scaleX(0.9964);transform-origin:0 0;">X.400 (Telekom business mail)</div><div class="t" style="left:638px;top:414px;font-size:14.53px;color:#595959;transform:scaleX(0.9906);transform-origin:0 0;">5043</div><div class="t" style="left:728px;top:414px;font-size:14.53px;color:#595959;transform:scaleX(1.0138);transform-origin:0 0;">*COM</div><div class="t" style="left:808px;top:414px;font-size:14.53px;color:#595959;transform:scaleX(1.0003);transform-origin:0 0;">*DEMO</div><div class="t" style="left:958px;top:414px;font-size:14.53px;color:#595959;transform:scaleX(0.9469);transform-origin:0 0;">289B8E53CB45608F</div><div class="t" style="left:1138px;top:414px;font-size:14.53px;color:#595959;transform:scaleX(0.9970);transform-origin:0 0;">*NOMAX</div><div class="t" style="left:1318px;top:414px;font-size:14.53px;color:#595959;transform:scaleX(0.9831);transform-origin:0 0;">31.12.2021</div><div class="hl" style="top:405px"></div><div class="row" style="top:442px;background:#fff"></div><div class="cb" style="top:451px"></div><div class="t" style="left:38px;top:451px;font-size:14.53px;font-weight:bold;color:#555;transform:scaleX(0.9563);transform-origin:0 0;">*AS2</div><div class="t" style="left:188px;top:451px;font-size:14.53px;font-weight:bold;color:#555;transform:scaleX(0.8886);transform-origin:0 0;">2MEBEFF</div><div class="t" style="left:288px;top:451px;font-size:14.53px;font-weight:bold;color:#555;transform:scaleX(0.9181);transform-origin:0 0;">EDIINT AS2</div><div class="t" style="left:638px;top:451px;font-size:14.53px;font-weight:bold;color:#555;transform:scaleX(0.9906);transform-origin:0 0;">5044</div><div class="t" style="left:728px;top:451px;font-size:14.53px;font-weight:bold;color:#555;transform:scaleX(1.0220);transform-origin:0 0;">*COM</div><div class="t" style="left:808px;top:451px;font-size:14.53px;font-weight:bold;color:#555;transform:scaleX(1.0087);transform-origin:0 0;">*DEMO</div><div class="t" style="left:958px;top:451px;font-size:14.53px;font-weight:bold;color:#555;transform:scaleX(0.9358);transform-origin:0 0;">5981BE05130C0E2C</div><div class="t" style="left:1138px;top:451px;font-size:14.53px;font-weight:bold;color:#555;transform:scaleX(0.9922);transform-origin:0 0;">*NOMAX</div><div class="t" style="left:1318px;top:451px;font-size:14.53px;font-weight:bold;color:#555;transform:scaleX(0.9831);transform-origin:0 0;">31.12.2021</div><div class="hl" style="top:442px"></div><div class="row" style="top:479px;background:#f4f4f4"></div><div class="cb" style="top:488px"></div><div class="t" style="left:38px;top:488px;font-size:14.53px;font-weight:bold;color:#555;transform:scaleX(0.9707);transform-origin:0 0;">*HTTP</div><div class="t" style="left:188px;top:488px;font-size:14.53px;font-weight:bold;color:#555;transform:scaleX(0.8886);transform-origin:0 0;">2MEBEFF</div><div class="t" style="left:288px;top:488px;font-size:14.53px;font-weight:bold;color:#555;transform:scaleX(0.9899);transform-origin:0 0;">HTTP (Hypertext Transfer Protocol)</div><div class="t" style="left:638px;top:488px;font-size:14.53px;font-weight:bold;color:#555;transform:scaleX(0.9906);transform-origin:0 0;">5046</div><div class="t" style="left:728px;top:488px;font-size:14.53px;font-weight:bold;color:#555;transform:scaleX(1.0220);transform-origin:0 0;">*COM</div><div class="t" style="left:808px;top:488px;font-size:14.53px;font-weight:bold;color:#555;transform:scaleX(1.0087);transform-origin:0 0;">*DEMO</div><div class="t" style="left:958px;top:488px;font-size:14.53px;font-weight:bold;color:#555;transform:scaleX(0.9261);transform-origin:0 0;">5023DFC5FCCE925D</div><div class="t" style="left:1138px;top:488px;font-size:14.53px;font-weight:bold;color:#555;transform:scaleX(0.9922);transform-origin:0 0;">*NOMAX</div><div class="t" style="left:1318px;top:488px;font-size:14.53px;font-weight:bold;color:#555;transform:scaleX(0.9831);transform-origin:0 0;">31.12.2021</div><div class="hl" style="top:479px"></div><div class="row" style="top:516px;background:#fff"></div><div class="cb" style="top:525px"></div><div class="t" style="left:38px;top:525px;font-size:14.53px;color:#595959;transform:scaleX(0.9678);transform-origin:0 0;">*SOA</div><div class="t" style="left:188px;top:525px;font-size:14.53px;color:#595959;transform:scaleX(0.8915);transform-origin:0 0;">2MEBEFF</div><div class="t" style="left:288px;top:525px;font-size:14.53px;color:#595959;transform:scaleX(0.9942);transform-origin:0 0;">SOA Client Enablement</div><div class="t" style="left:638px;top:525px;font-size:14.53px;color:#595959;transform:scaleX(0.9906);transform-origin:0 0;">5047</div><div class="t" style="left:728px;top:525px;font-size:14.53px;color:#595959;transform:scaleX(1.0138);transform-origin:0 0;">*COM</div><div class="t" style="left:808px;top:525px;font-size:14.53px;color:#595959;transform:scaleX(1.0003);transform-origin:0 0;">*DEMO</div><div class="t" style="left:958px;top:525px;font-size:14.53px;color:#595959;transform:scaleX(0.9424);transform-origin:0 0;">87D4C7447C20F7E9</div><div class="t" style="left:1138px;top:525px;font-size:14.53px;color:#595959;transform:scaleX(0.9970);transform-origin:0 0;">*NOMAX</div><div class="t" style="left:1318px;top:525px;font-size:14.53px;color:#595959;transform:scaleX(0.9831);transform-origin:0 0;">31.12.2021</div><div class="hl" style="top:516px"></div><div class="row" style="top:553px;background:#f4f4f4"></div><div class="cb" style="top:562px"></div><div class="t" style="left:38px;top:562px;font-size:14.53px;font-weight:bold;color:#555;transform:scaleX(0.9599);transform-origin:0 0;">*OFTP2</div><div class="t" style="left:188px;top:562px;font-size:14.53px;font-weight:bold;color:#555;transform:scaleX(0.8886);transform-origin:0 0;">2MEBEFF</div><div class="t" style="left:288px;top:562px;font-size:14.53px;font-weight:bold;color:#555;transform:scaleX(0.9900);transform-origin:0 0;">OFTP Enablement</div><div class="t" style="left:638px;top:562px;font-size:14.53px;font-weight:bold;color:#555;transform:scaleX(0.9906);transform-origin:0 0;">5048</div><div class="t" style="left:728px;top:562px;font-size:14.53px;font-weight:bold;color:#555;transform:scaleX(1.0220);transform-origin:0 0;">*COM</div><div class="t" style="left:808px;top:562px;font-size:14.53px;font-weight:bold;color:#555;transform:scaleX(1.0087);transform-origin:0 0;">*DEMO</div><div class="t" style="left:958px;top:562px;font-size:14.53px;font-weight:bold;color:#555;transform:scaleX(0.9379);transform-origin:0 0;">F9C4545F672F55B0</div><div class="t" style="left:1138px;top:562px;font-size:14.53px;font-weight:bold;color:#555;transform:scaleX(0.9922);transform-origin:0 0;">*NOMAX</div><div class="t" style="left:1318px;top:562px;font-size:14.53px;font-weight:bold;color:#555;transform:scaleX(0.9831);transform-origin:0 0;">31.12.2021</div><div class="hl" style="top:553px"></div><div class="row" style="top:590px;background:#fff"></div><div class="cb" style="top:599px"></div><div class="t" style="left:38px;top:599px;font-size:14.53px;font-weight:bold;color:#555;transform:scaleX(0.9243);transform-origin:0 0;">*DB2EXPORT</div><div class="t" style="left:188px;top:599px;font-size:14.53px;font-weight:bold;color:#555;transform:scaleX(0.8886);transform-origin:0 0;">2MEBEFF</div><div class="t" style="left:288px;top:599px;font-size:14.53px;font-weight:bold;color:#555;transform:scaleX(0.9349);transform-origin:0 0;">DB2 file export (XLS, CSV...)</div><div class="t" style="left:638px;top:599px;font-size:14.53px;font-weight:bold;color:#555;transform:scaleX(0.9906);transform-origin:0 0;">5050</div><div class="t" style="left:728px;top:599px;font-size:14.53px;font-weight:bold;color:#555;transform:scaleX(1.0141);transform-origin:0 0;">*PGM</div><div class="t" style="left:808px;top:599px;font-size:14.53px;font-weight:bold;color:#555;transform:scaleX(1.0087);transform-origin:0 0;">*DEMO</div><div class="t" style="left:958px;top:599px;font-size:14.53px;font-weight:bold;color:#555;transform:scaleX(0.9037);transform-origin:0 0;">DEBE80EC78341FCE</div><div class="t" style="left:1138px;top:599px;font-size:14.53px;font-weight:bold;color:#555;transform:scaleX(0.9922);transform-origin:0 0;">*NOMAX</div><div class="t" style="left:1318px;top:599px;font-size:14.53px;font-weight:bold;color:#555;transform:scaleX(0.9831);transform-origin:0 0;">31.12.2021</div><div class="hl" style="top:590px"></div><div class="row" style="top:627px;background:#f4f4f4"></div><div class="cb" style="top:636px"></div><div class="t" style="left:38px;top:636px;font-size:14.53px;color:#595959;transform:scaleX(0.9670);transform-origin:0 0;">*DB2MAPS</div><div class="t" style="left:188px;top:636px;font-size:14.53px;color:#595959;transform:scaleX(0.8915);transform-origin:0 0;">2MEBEFF</div><div class="t" style="left:288px;top:636px;font-size:14.53px;color:#595959;transform:scaleX(0.9957);transform-origin:0 0;">DB2 maps</div><div class="t" style="left:638px;top:636px;font-size:14.53px;color:#595959;transform:scaleX(0.9906);transform-origin:0 0;">5051</div><div class="t" style="left:728px;top:636px;font-size:14.53px;color:#595959;transform:scaleX(1.0060);transform-origin:0 0;">*PGM</div><div class="t" style="left:808px;top:636px;font-size:14.53px;color:#595959;transform:scaleX(1.0003);transform-origin:0 0;">*DEMO</div><div class="t" style="left:958px;top:636px;font-size:14.53px;color:#595959;transform:scaleX(0.9269);transform-origin:0 0;">FB6F7435DE31F37F</div><div class="t" style="left:1138px;top:636px;font-size:14.53px;color:#595959;transform:scaleX(0.9970);transform-origin:0 0;">*NOMAX</div><div class="t" style="left:1318px;top:636px;font-size:14.53px;color:#595959;transform:scaleX(0.9831);transform-origin:0 0;">31.12.2021</div><div class="hl" style="top:627px"></div><div class="row" style="top:664px;background:#fff"></div><div class="cb" style="top:673px"></div><div class="t" style="left:38px;top:673px;font-size:14.53px;color:#595959;transform:scaleX(0.9084);transform-origin:0 0;">*REPORT</div><div class="t" style="left:188px;top:673px;font-size:14.53px;color:#595959;transform:scaleX(0.8915);transform-origin:0 0;">2MEBEFF</div><div class="t" style="left:288px;top:673px;font-size:14.53px;color:#595959;transform:scaleX(0.9922);transform-origin:0 0;">Report Server</div><div class="t" style="left:638px;top:673px;font-size:14.53px;color:#595959;transform:scaleX(0.9906);transform-origin:0 0;">5070</div><div class="t" style="left:728px;top:673px;font-size:14.53px;color:#595959;transform:scaleX(1.0060);transform-origin:0 0;">*PGM</div><div class="t" style="left:808px;top:673px;font-size:14.53px;color:#595959;transform:scaleX(1.0003);transform-origin:0 0;">*DEMO</div><div class="t" style="left:958px;top:673px;font-size:14.53px;color:#595959;transform:scaleX(0.9089);transform-origin:0 0;">9FC782FE4F941F2F</div><div class="t" style="left:1138px;top:673px;font-size:14.53px;color:#595959;transform:scaleX(0.9970);transform-origin:0 0;">*NOMAX</div><div class="t" style="left:1318px;top:673px;font-size:14.53px;color:#595959;transform:scaleX(0.9831);transform-origin:0 0;">31.12.2021</div><div class="hl" style="top:664px"></div><div class="row" style="top:701px;background:#f4f4f4"></div><div class="cb" style="top:710px"></div><div class="t" style="left:38px;top:710px;font-size:14.53px;color:#595959;transform:scaleX(0.9304);transform-origin:0 0;">*OCSP</div><div class="t" style="left:188px;top:710px;font-size:14.53px;color:#595959;transform:scaleX(0.8915);transform-origin:0 0;">2MEBEFF</div><div class="t" style="left:288px;top:710px;font-size:14.53px;color:#595959;transform:scaleX(1.0032);transform-origin:0 0;">Onlince certificate status protocol OCSP</div><div class="t" style="left:638px;top:710px;font-size:14.53px;color:#595959;transform:scaleX(0.9906);transform-origin:0 0;">5071</div><div class="t" style="left:728px;top:710px;font-size:14.53px;color:#595959;transform:scaleX(1.0060);transform-origin:0 0;">*PGM</div><div class="t" style="left:808px;top:710px;font-size:14.53px;color:#595959;transform:scaleX(1.0003);transform-origin:0 0;">*DEMO</div><div class="t" style="left:958px;top:710px;font-size:14.53px;color:#595959;transform:scaleX(0.9620);transform-origin:0 0;">F7701F17467D4B03</div><div class="t" style="left:1138px;top:710px;font-size:14.53px;color:#595959;transform:scaleX(0.9970);transform-origin:0 0;">*NOMAX</div><div class="t" style="left:1318px;top:710px;font-size:14.53px;color:#595959;transform:scaleX(0.9831);transform-origin:0 0;">31.12.2021</div><div class="hl" style="top:701px"></div><div class="row" style="top:738px;background:#fff"></div><div class="cb" style="top:747px"></div><div class="t" style="left:38px;top:747px;font-size:14.53px;color:#595959;transform:scaleX(0.9171);transform-origin:0 0;">*ARCHIVE</div><div class="t" style="left:188px;top:747px;font-size:14.53px;color:#595959;transform:scaleX(0.8915);transform-origin:0 0;">2MEBEFF</div><div class="t" style="left:288px;top:747px;font-size:14.53px;color:#595959;transform:scaleX(1.0261);transform-origin:0 0;">Archive enablement</div><div class="t" style="left:638px;top:747px;font-size:14.53px;color:#595959;transform:scaleX(0.9906);transform-origin:0 0;">5072</div><div class="t" style="left:728px;top:747px;font-size:14.53px;color:#595959;transform:scaleX(1.0060);transform-origin:0 0;">*PGM</div><div class="t" style="left:808px;top:747px;font-size:14.53px;color:#595959;transform:scaleX(0.9260);transform-origin:0 0;">*NOLICENSE</div><div class="t" style="left:1138px;top:747px;font-size:14.53px;color:#595959;transform:scaleX(0.9970);transform-origin:0 0;">*NOMAX</div><div class="t" style="left:1318px;top:747px;font-size:14.53px;color:#595959;transform:scaleX(0.9977);transform-origin:0 0;">*NONE</div><div class="hl" style="top:738px"></div><div class="vl" style="left:29px;top:35px;height:740px"></div><div class="vl" style="left:179px;top:35px;height:740px"></div><div class="vl" style="left:279px;top:35px;height:740px"></div><div class="vl" style="left:629px;top:35px;height:740px"></div><div class="vl" style="left:719px;top:35px;height:740px"></div><div class="vl" style="left:799px;top:35px;height:740px"></div><div class="vl" style="left:949px;top:35px;height:740px"></div><div class="vl" style="left:1129px;top:35px;height:740px"></div><div class="vl" style="left:1309px;top:35px;height:740px"></div></div>
<div id="sbar" class="a"></div>
<div id="sthumb" class="a"></div>
<svg class="a" style="left:305px;top:981px" width="9" height="9" viewBox="0 0 9 9"><path d="M6 1 L2.5 4.5 L6 8" fill="none" stroke="#505050" stroke-width="1.8"/></svg>
<svg class="a" style="left:1685px;top:981px" width="9" height="9" viewBox="0 0 9 9"><path d="M3 1 L6.5 4.5 L3 8" fill="none" stroke="#505050" stroke-width="1.8"/></svg>
<svg class="a" style="left:1505px;top:995px" width="40" height="38" viewBox="1505 995 40 38">
  <circle cx="1525.1" cy="1013.7" r="12.4" fill="none" stroke="#707070" stroke-width="1.8"/>
  <path d="M1525.1 1020 L1525.1 1008.6 M1520.2 1013.2 L1525.1 1008.2 L1530 1013.2" fill="none" stroke="#707070" stroke-width="1.9"/>
</svg>
<div id="pg" class="a">
  <div class="a" style="left:38px;top:-1px;width:31px;height:34px;background:#f59b00"></div>
  <div class="a" style="left:68px;top:0;width:1px;height:32px;background:#ddd"></div>
  <div class="a" style="left:96px;top:0;width:1px;height:32px;background:#ddd"></div>
  <svg class="a" style="left:15px;top:12px" width="8" height="10" viewBox="0 0 8 10"><path d="M5.5 1 L2 5 L5.5 9" fill="none" stroke="#666" stroke-width="1.3"/></svg>
  <svg class="a" style="left:112px;top:12px" width="8" height="10" viewBox="0 0 8 10"><path d="M2.5 1 L6 5 L2.5 9" fill="none" stroke="#666" stroke-width="1.3"/></svg>
</div>

<div class="t" style="left:301px;top:1005px;font-size:14.53px;font-weight:bold;color:#333;transform:scaleX(0.9914);transform-origin:0 0;">35 Einträge gesamt, von 1 bis 20 angezeigt</div>
<div class="t" style="left:1612px;top:1005px;font-size:13.7px;color:#fff;transform:scaleX(0.9906);transform-origin:0 0;">1</div>
<div class="t" style="left:1641px;top:1005px;font-size:13.7px;color:#333;transform:scaleX(0.9906);transform-origin:0 0;">2</div>
<div id="fobar" class="a"></div><div id="ftr" class="a"></div>
<div class="t" style="left:21px;top:1243px;font-size:13.49px;color:#f0f0f0;transform:scaleX(1.0255);transform-origin:0 0;">i-effect</div>
<div class="t" style="left:63px;top:1240px;font-size:9.5px;color:#f0f0f0">&#174;</div>
<div class="t" style="left:74px;top:1243px;font-size:13.49px;color:#f0f0f0;transform:scaleX(1.0236);transform-origin:0 0;">WebControl</div>
<div class="t" style="left:765.82px;top:1243px;font-size:13.49px;color:#f0f0f0;transform:scaleX(0.9683);transform-origin:100% 0;white-space:pre;">Tabelle: MODULES  ::  Datenbankbibliothek: IEFFECTDB  ::  i-effect: V2R9M0  ::  System: testfp:443  ::  Seriennummer: 7810FB0  ::  Partition: 22 (TESTFP)</div>
</body></html>
